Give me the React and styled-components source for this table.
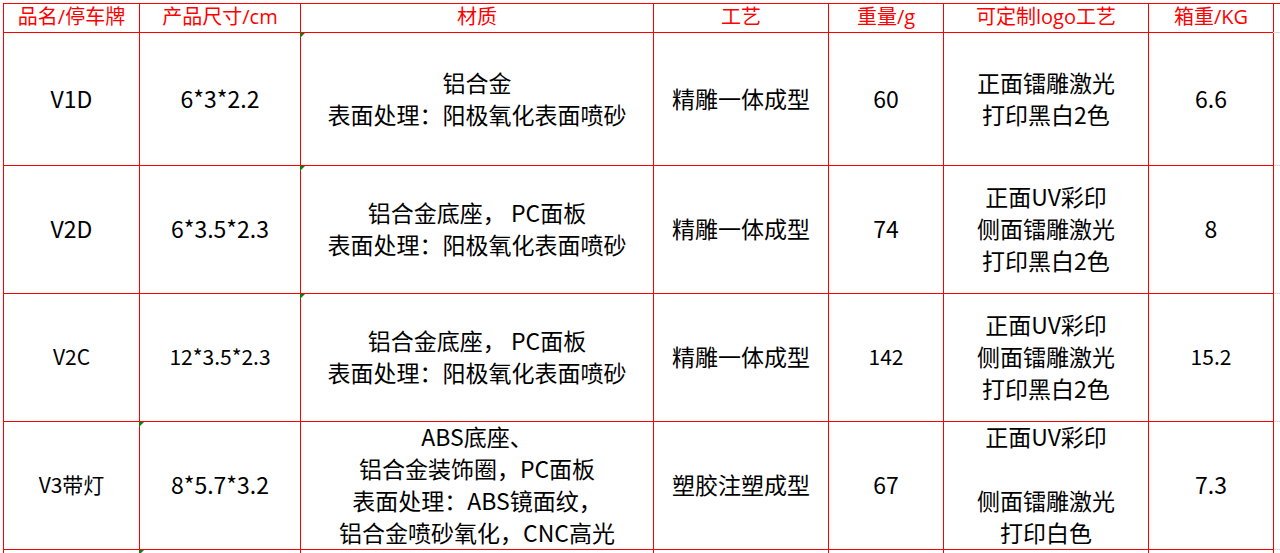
import React from 'react';
import styled, { createGlobalStyle } from 'styled-components';

const GlobalStyle = createGlobalStyle`
  html, body {
    margin: 0;
    padding: 0;
    background: #ffffff;
    overflow: hidden;
  }
  body {
    font-family: "Open Sans", "Noto Sans CJK SC", sans-serif;
  }
`;

const columnWidths = [136, 161, 353, 175, 115, 205, 125];

const headers = ['品名/停车牌', '产品尺寸/cm', '材质', '工艺', '重量/g', '可定制logo工艺', '箱重/KG'];

const surface = '铝合金底座， PC面板\n表面处理：阳极氧化表面喷砂';

// s = smaller text, mark = green corner marker
const rows = [
  {
    height: 133,
    cells: [
      { text: 'V1D' },
      { text: '6*3*2.2' },
      { text: '铝合金\n表面处理：阳极氧化表面喷砂', mark: true },
      { text: '精雕一体成型' },
      { text: '60' },
      { text: '正面镭雕激光\n打印黑白2色' },
      { text: '6.6' },
    ],
  },
  {
    height: 128,
    cells: [
      { text: 'V2D' },
      { text: '6*3.5*2.3' },
      { text: surface, mark: true },
      { text: '精雕一体成型' },
      { text: '74' },
      { text: '正面UV彩印\n侧面镭雕激光\n打印黑白2色' },
      { text: '8' },
    ],
  },
  {
    height: 128,
    cells: [
      { text: 'V2C', s: true },
      { text: '12*3.5*2.3', s: true },
      { text: surface, mark: true },
      { text: '精雕一体成型' },
      { text: '142', s: true },
      { text: '正面UV彩印\n侧面镭雕激光\n打印黑白2色' },
      { text: '15.2', s: true },
    ],
  },
  {
    height: 128,
    cells: [
      { text: 'V3带灯', s: true },
      { text: '8*5.7*3.2', mark: true },
      { text: 'ABS底座、\n铝合金装饰圈，PC面板\n表面处理：ABS镜面纹，\n铝合金喷砂氧化，CNC高光' },
      { text: '塑胶注塑成型' },
      { text: '67' },
      { text: '正面UV彩印\n\n侧面镭雕激光\n打印白色' },
      { text: '7.3' },
    ],
  },
  {
    height: 40,
    cells: [
      { text: '' },
      { text: '', mark: true },
      { text: '' },
      { text: '' },
      { text: '' },
      { text: '' },
      { text: '' },
    ],
  },
];

export default function App() {
  return (
    <>
      <GlobalStyle />
      <Sheet>
        <Grid>
          {headers.map((h) => (
            <HeaderCell key={h}>{h}</HeaderCell>
          ))}
          <SpareCell $h={29} />
          {rows.map((row, r) => (
            <React.Fragment key={r}>
              {row.cells.map((cell, c) => (
                <Cell key={c} $h={row.height} $small={cell.s}>
                  {cell.mark && <Marker />}
                  <CellText>{cell.text}</CellText>
                </Cell>
              ))}
              <SpareCell $h={row.height} />
            </React.Fragment>
          ))}
        </Grid>
      </Sheet>
    </>
  );
}

const Sheet = styled.div`
  padding: 3px 0 0 3px;
  height: 553px;
  box-sizing: border-box;
  overflow: hidden;
`;

const Grid = styled.div`
  display: grid;
  grid-template-columns: ${columnWidths.map((w) => `${w}px`).join(' ')} 40px;
  border-left: 1px solid #ff0000;
  border-top: 1px solid #ff0000;
  width: max-content;
`;

const HeaderCell = styled.div`
  box-sizing: border-box;
  height: 29px;
  border-right: 1px solid #ff0000;
  border-bottom: 1px solid #ff0000;
  color: #ff0000;
  font-size: 20px;
  line-height: 25px;
  text-align: center;
  white-space: nowrap;
`;

const Cell = styled.div`
  position: relative;
  box-sizing: border-box;
  height: ${(p) => p.$h}px;
  border-right: 1px solid #ff0000;
  border-bottom: 1px solid #ff0000;
  display: flex;
  align-items: center;
  justify-content: center;
  text-align: center;
  white-space: pre-line;
  color: #000000;
  font-family: "Noto Sans CJK SC", "Noto Sans", sans-serif;
  font-size: ${(p) => (p.$small ? 21 : 23)}px;
  line-height: 32px;
`;

const CellText = styled.div`
  margin-top: -3px;
`;

const SpareCell = styled.div`
  box-sizing: border-box;
  height: ${(p) => p.$h}px;
  border-bottom: 1px solid #d9d9d9;
  margin-left: -1px;
`;

const Marker = styled.span`
  position: absolute;
  top: 0;
  left: -1px;
  width: 0;
  height: 0;
  border-top: 5px solid #107c10;
  border-right: 5px solid transparent;
`;
